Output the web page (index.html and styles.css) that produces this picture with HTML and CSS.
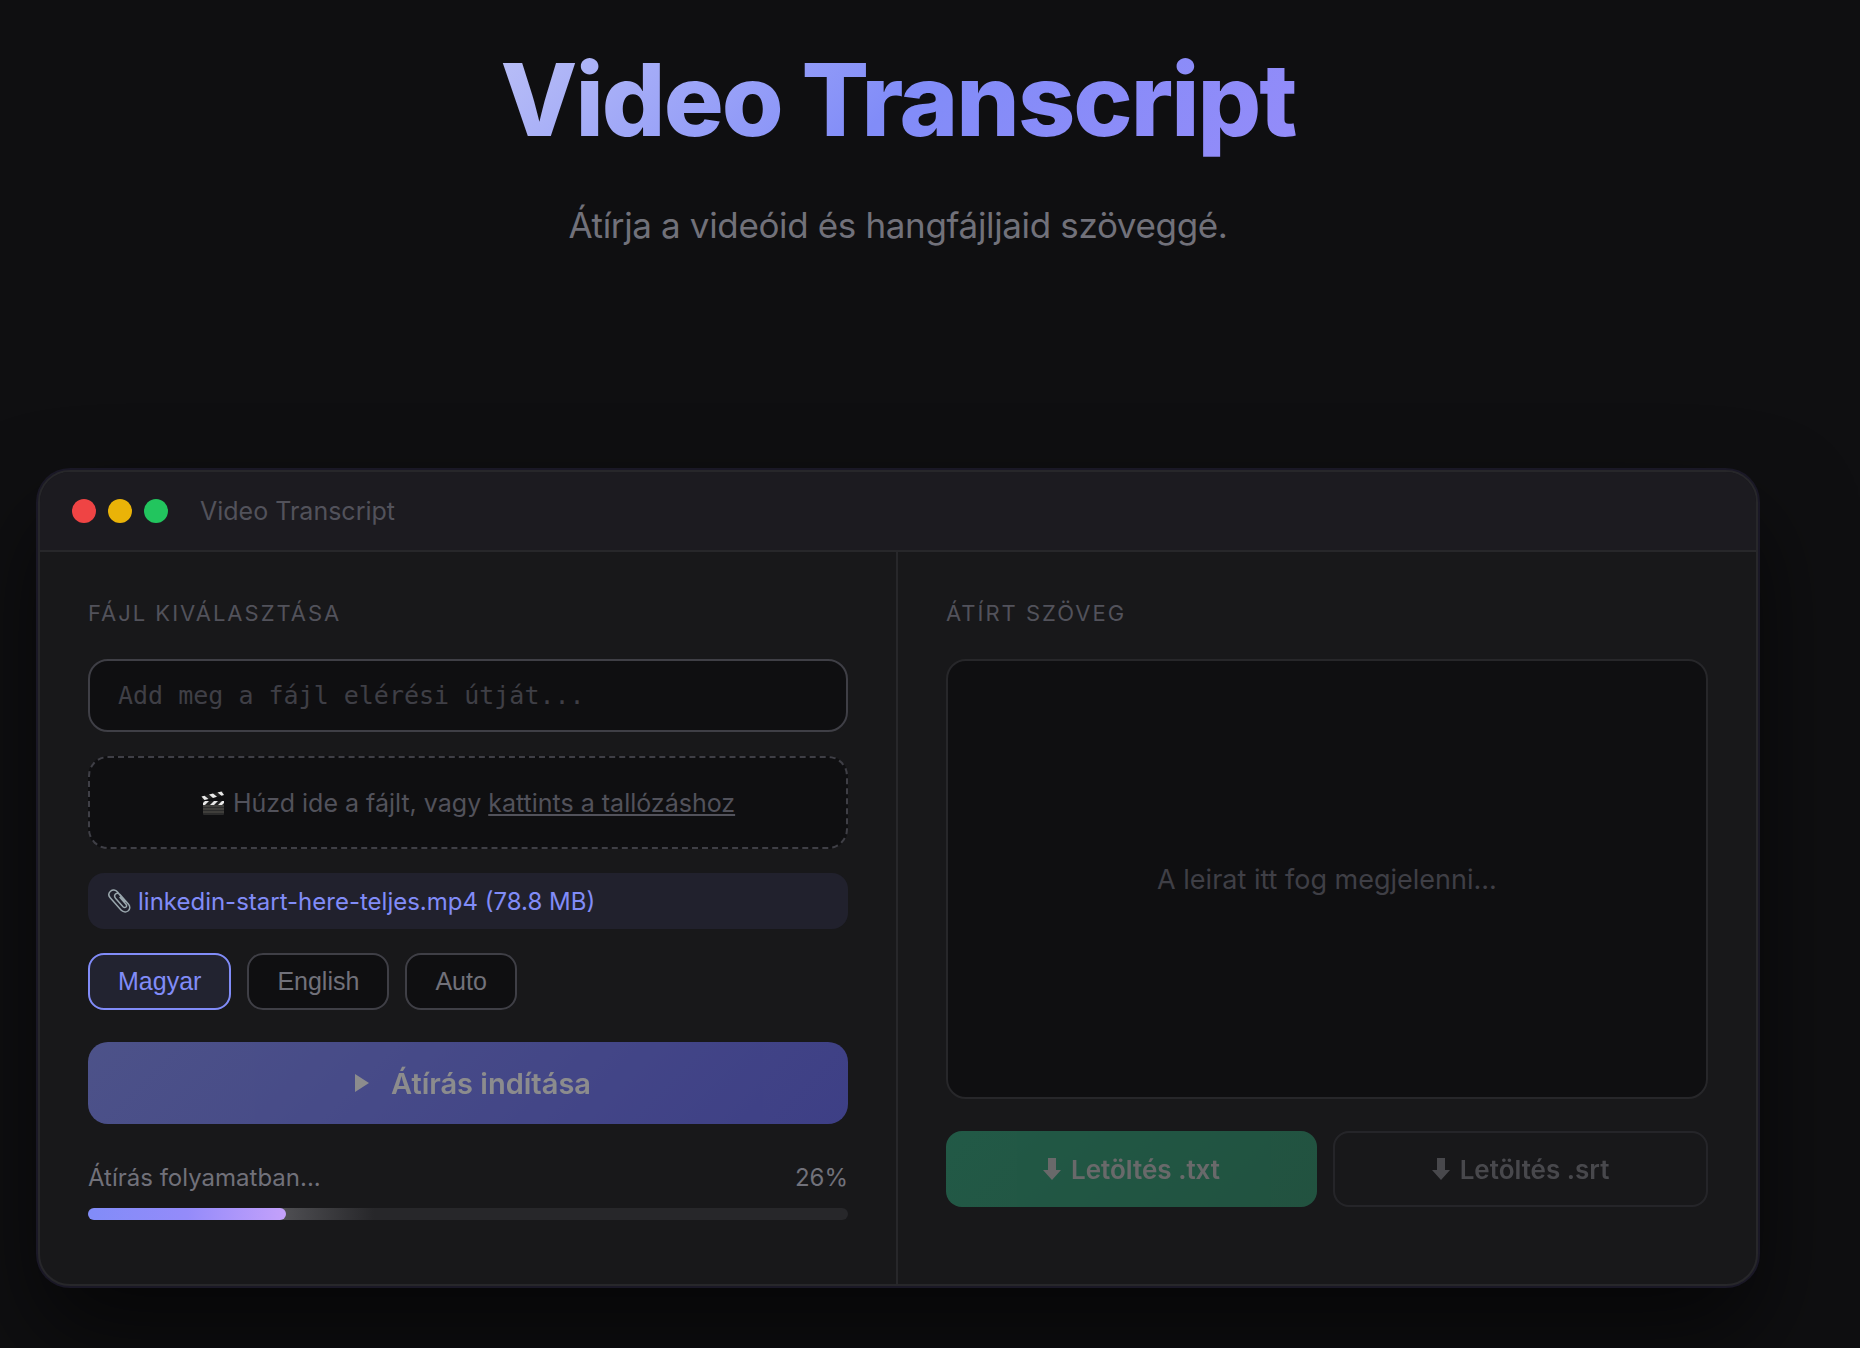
FILE: index.html
```html
<!DOCTYPE html>
<html lang="hu">
<head>
  <meta charset="UTF-8">
  <meta name="viewport" content="width=device-width, initial-scale=1.0">
  <title>Video Transcript</title>
  <link rel="stylesheet" href="styles.css">
</head>
<body>
  <header class="hero">
    <h1>Video Transcript</h1>
    <p>Átírja a videóid és hangfájljaid szöveggé.</p>
  </header>

  <main class="window">
    <div class="titlebar">
      <div class="dots">
        <span class="dot red"></span>
        <span class="dot yellow"></span>
        <span class="dot green"></span>
      </div>
      <span class="titlebar-text">Video Transcript</span>
    </div>

    <div class="panels">
      <section class="panel">
        <label class="panel-label" for="filePath">Fájl kiválasztása</label>
        <input type="text" id="filePath" class="path-input" placeholder="Add meg a fájl elérési útját...">

        <div class="drop-zone" id="dropZone">
          <svg class="emoji" viewBox="0 0 24 24" aria-hidden="true">
            <rect x="2" y="10" width="21" height="14" rx="1" fill="#2b2b2b"/>
            <path d="M2 15h21M2 18h21M2 21h21" stroke="#55524c" stroke-width="1"/>
            <path d="M2 10h21v4H2z" fill="#222"/>
            <path d="M2 14v-2l2-2h4l-4 4zM9 14l4-4h4l-4 4zM17 14l4-4h2v2l-2 2z" fill="#e8e8e8"/>
            <path d="M0.500 5.500L22 0l1 4L1.500 9.500z" fill="#222"/>
            <path d="M0.500 5.500l3-0.800 4 3.300-4 1zM8 3.600l4-1 4 3.200-4 1.100zM16.500 1.500l4-1 2.500 3.500-2.500 0.700z" fill="#e8e8e8"/>
          </svg>
          <span>Húzd ide a fájlt, vagy <a href="#">kattints a tallózáshoz</a></span>
        </div>

        <div class="file-info">
          <svg class="emoji" viewBox="0 0 24 24" aria-hidden="true">
            <path d="M17 12.500L9.500 3C7.500 0.500 4.500 0.500 2.500 2.300c-2 1.800-2 4.500-0.300 6.500L13 21c1.800 2 4.800 2.500 7 1 2.200-1.700 2.300-4.500 0.500-6.700L12 5.500c-1.500-1.600-3.300-1.500-4.500-0.500-1.200 1.200-1.200 2.700 0 4.200l7.500 8.500c1 1 2.200 1 3 0.300 0.800-0.800 0.700-1.800 0-2.700L12 8.500" fill="none" stroke="#9aa7ad" stroke-width="1.500" stroke-linecap="round"/>
          </svg>
          <span>linkedin-start-here-teljes.mp4 (78.8 MB)</span>
        </div>

        <div class="languages">
          <button type="button" class="lang active" data-lang="hu">Magyar</button>
          <button type="button" class="lang" data-lang="en">English</button>
          <button type="button" class="lang" data-lang="auto">Auto</button>
        </div>

        <button type="button" class="start-btn" disabled>
          <svg class="play" viewBox="-10 0 24 18" aria-hidden="true"><path d="M0 0l14 9-14 9z"/></svg>
          Átírás indítása
        </button>

        <div class="progress">
          <div class="progress-head">
            <span>Átírás folyamatban...</span>
            <span>26%</span>
          </div>
          <div class="progress-track">
            <div class="progress-fill" style="width: 26%"></div>
          </div>
        </div>
      </section>

      <section class="panel">
        <h2 class="panel-label">Átírt szöveg</h2>
        <div class="output">A leirat itt fog megjelenni...</div>

        <div class="downloads">
          <button type="button" class="download-btn txt" disabled>
            <svg class="arrow" viewBox="0 0 18 22" aria-hidden="true"><path d="M5 0h8v12h5l-9 10-9-10h5z"/></svg>
            Letöltés .txt
          </button>
          <button type="button" class="download-btn srt" disabled>
            <svg class="arrow" viewBox="0 0 18 22" aria-hidden="true"><path d="M5 0h8v12h5l-9 10-9-10h5z"/></svg>
            Letöltés .srt
          </button>
        </div>
      </section>
    </div>
  </main>
</body>
</html>
```

FILE: styles.css
```css
* {
  margin: 0;
  padding: 0;
  box-sizing: border-box;
}

body {
  min-height: 100vh;
  padding: 40px 102px 60px 38px;
  background: #0f0f11;
  color: #71717a;
  font-family: Inter, sans-serif;
  font-size: 25px;
  overflow-x: hidden;
}

.hero {
  height: 430px;
  text-align: center;
}

.hero h1 {
  font-size: 100px;
  font-weight: 800;
  line-height: 120px;
  letter-spacing: -0.02em;
  background: linear-gradient(135deg, #f4f4f5 0%, #818cf8 50%, #a78bfa 100%);
  -webkit-background-clip: text;
  background-clip: text;
  -webkit-text-fill-color: transparent;
}

.hero p {
  margin-top: 36px;
  font-size: 35px;
  line-height: 58px;
  letter-spacing: -0.01em;
}

.window {
  background: #18181a;
  border: 2px solid #27272a;
  border-radius: 32px;
  box-shadow: 0 0 0 2px #1a1826, 0 48px 96px rgba(0, 0, 0, 0.6);
  overflow: hidden;
}

.titlebar {
  display: flex;
  align-items: center;
  gap: 32px;
  height: 80px;
  padding: 0 32px;
  background: #1c1b20;
  border-bottom: 2px solid #27272a;
}

.dots {
  display: flex;
  gap: 12px;
}

.dot {
  width: 24px;
  height: 24px;
  border-radius: 50%;
}

.red {
  background: #ef4444;
}

.yellow {
  background: #eab308;
}

.green {
  background: #22c55e;
}

.titlebar-text {
  color: #52525b;
}

.panels {
  display: grid;
  grid-template-columns: 1fr 1fr;
}

.panel {
  padding: 48px 48px 64px;
}

.panel:first-child {
  border-right: 2px solid #27272a;
}

.panel-label {
  display: block;
  margin-bottom: 32px;
  color: #52525b;
  font-size: 22px;
  font-weight: 400;
  line-height: 27px;
  letter-spacing: 2px;
  text-transform: uppercase;
}

.path-input {
  display: block;
  width: 100%;
  height: 73px;
  padding: 0 28px;
  background: #0f0f11;
  border: 2px solid #3f3f46;
  border-radius: 20px;
  color: #e4e4e7;
  font-family: "DejaVu Sans Mono", monospace;
  font-size: 25px;
}

.path-input::placeholder {
  color: #3f3f46;
}

.drop-zone {
  display: flex;
  align-items: center;
  justify-content: center;
  gap: 8px;
  height: 93px;
  margin-top: 24px;
  background: #0f0f11;
  border: 2px dashed #3f3f46;
  border-radius: 20px;
  color: #52525b;
}

.drop-zone a {
  color: inherit;
}

.emoji {
  width: 24px;
  height: 24px;
  flex-shrink: 0;
}

.file-info {
  display: flex;
  align-items: center;
  gap: 6px;
  height: 56px;
  margin-top: 24px;
  padding: 0 20px;
  background: #21212d;
  border-radius: 16px;
  color: #818cf8;
  font-size: 24px;
}

.languages {
  display: flex;
  gap: 16px;
  margin-top: 24px;
}

.lang {
  height: 57px;
  padding: 0 28px;
  background: #0f0f11;
  border: 2px solid #3f3f46;
  border-radius: 16px;
  color: #71717a;
  font-family: "Liberation Sans", Arial, sans-serif;
  font-size: 25px;
  cursor: pointer;
}

.lang.active {
  background: #222330;
  border-color: #818cf8;
  color: #818cf8;
}

.start-btn {
  display: flex;
  align-items: center;
  justify-content: center;
  gap: 22px;
  width: 100%;
  height: 82px;
  margin-top: 32px;
  background: linear-gradient(135deg, #818cf8, #6366f1);
  border: none;
  border-radius: 20px;
  color: #fff;
  font-family: inherit;
  font-size: 29px;
  font-weight: 600;
}

.start-btn:disabled {
  opacity: 0.5;
}

.play {
  width: 24px;
  height: 18px;
  fill: currentColor;
}

.progress {
  margin-top: 36px;
}

.progress-head {
  display: flex;
  justify-content: space-between;
  margin-bottom: 12px;
  font-size: 24px;
  line-height: 36px;
}

.progress-track {
  position: relative;
  z-index: 0;
  height: 12px;
  background: #27272a;
  border-radius: 6px;
}

.progress-fill {
  position: relative;
  height: 100%;
  background: linear-gradient(90deg, #818cf8, #948bfa 50%, #c4a1fb);
  border-radius: 6px;
}

/* light trail running ahead of the bar */
.progress-fill::after {
  content: "";
  position: absolute;
  top: 0;
  right: -88px;
  z-index: -1;
  width: 94px;
  height: 100%;
  background: linear-gradient(90deg, #505054, #27272a);
}

.output {
  display: flex;
  align-items: center;
  justify-content: center;
  height: 440px;
  background: #0f0f11;
  border: 2px solid #27272a;
  border-radius: 20px;
  color: #3f3f46;
  font-size: 27px;
}

.downloads {
  display: flex;
  gap: 16px;
  margin-top: 32px;
}

.download-btn {
  display: flex;
  flex: 1;
  align-items: center;
  justify-content: center;
  gap: 10px;
  height: 76px;
  border: none;
  border-radius: 16px;
  color: #fff;
  font-family: inherit;
  font-size: 26px;
  font-weight: 600;
}

.download-btn:disabled {
  opacity: 0.35;
}

.txt {
  background: linear-gradient(135deg, #34d399, #34bd85);
}

.srt {
  background: transparent;
  border: 2px solid #3f3f46;
  color: #a1a1aa;
}

.arrow {
  width: 18px;
  height: 22px;
  fill: currentColor;
}

@media (max-width: 900px) {
  body {
    padding: 40px 20px;
  }

  .hero {
    height: auto;
    margin-bottom: 60px;
  }

  .hero h1 {
    font-size: 56px;
    line-height: 68px;
  }

  .panels {
    grid-template-columns: 1fr;
  }
}
```
